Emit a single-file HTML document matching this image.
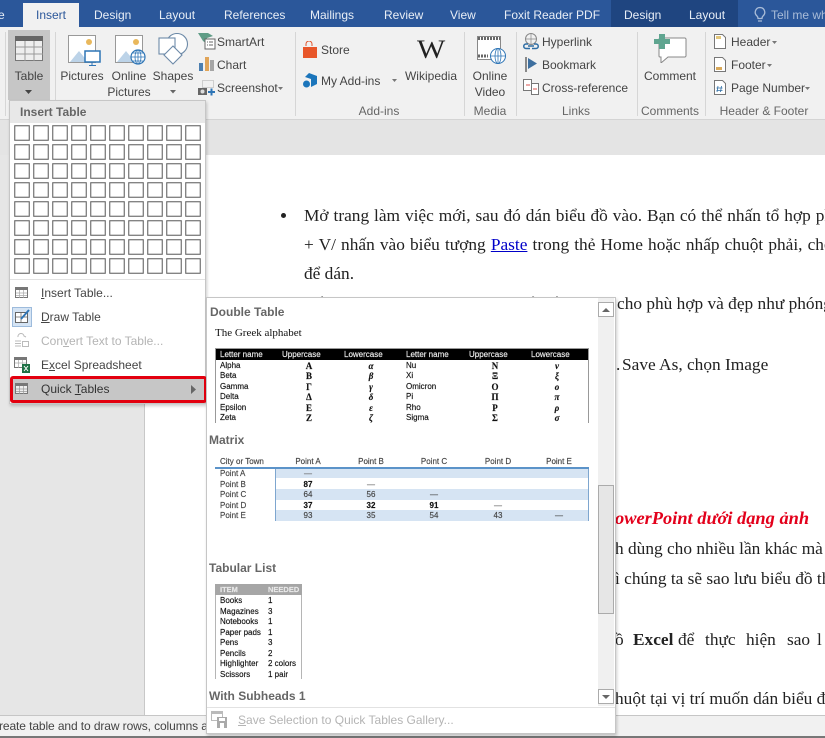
<!DOCTYPE html>
<html><head><meta charset="utf-8"><style>
html,body{margin:0;padding:0}
body{width:825px;height:738px;position:relative;overflow:hidden;background:#e6e6e6;font-family:"Liberation Sans","DejaVu Sans",sans-serif;font-size:12px;color:#444}
div,span,svg{position:absolute}
u{position:static}
.t{white-space:nowrap;line-height:16px;height:16px}
.c{transform:translateX(-50%)}
.tab{color:#e8eef6;top:7px;font-size:12px}
.g{color:#666;top:103px}
.d{font-family:"Liberation Serif","DejaVu Serif",serif;font-size:17.33px;color:#222;white-space:nowrap;line-height:20px;height:20px}
.sep{width:1px;background:#d6d6d6;top:32px;height:84px}
.m{left:41px;color:#444}
.h{left:209px;font-weight:bold;color:#666;font-size:12px}
.s{font-size:8px;line-height:10px;height:10px;white-space:nowrap;color:#111;margin-top:1px;-webkit-text-stroke:.15px currentColor}
.b{font-weight:bold}
.wh{color:#eee}
.se{font-family:"Liberation Serif",serif;font-weight:bold;font-size:9px}
.i{font-family:"Liberation Serif",serif;font-style:italic;font-weight:bold;font-size:9px}
</style></head><body>

<!-- Document -->
<div style="left:0;top:119px;width:825px;height:36px;background:#e4e4e4"></div>
<div style="left:144px;top:155px;width:681px;height:560px;background:#fff;border-left:1px solid #c8c8c8"></div>
<div style="left:281px;top:213px;width:5px;height:5px;border-radius:50%;background:#222"></div>
<div class="d" style="left:304px;top:206px;word-spacing:.6px">Mở trang làm việc mới, sau đó dán biểu đồ vào. Bạn có thể nhấn tổ hợp phím</div>
<div class="d" style="left:304px;top:235px;word-spacing:.8px">+ V/ nhấn vào biểu tượng <u style="color:#0000c8">Paste</u> trong thẻ Home hoặc nhấp chuột phải, chọn</div>
<div class="d" style="left:304px;top:264px">để dán.</div>
<div class="d" style="left:304px;top:294px">Điều chỉnh lại kích thước của biểu đồ</div>
<div class="d" style="left:617px;top:294px">cho phù hợp và đẹp như phóng</div>
<div class="d" style="left:616px;top:355px">.</div><div class="d" style="left:622px;top:355px">Save As, chọn Image</div>
<div class="d" style="left:615px;top:508px;font-size:18.4px;color:#e3001b;font-weight:bold;font-style:italic">owerPoint dưới dạng ảnh</div>
<div class="d" style="left:615px;top:539px">h dùng cho nhiều lần khác mà</div>
<div class="d" style="left:615px;top:569px">ì chúng ta sẽ sao lưu biểu đồ th</div>
<div class="d" style="left:615px;top:630px">ồ</div><div class="d" style="left:633px;top:630px;font-weight:bold">Excel</div><div class="d" style="left:678px;top:630px">để</div><div class="d" style="left:705px;top:630px">thực</div><div class="d" style="left:746px;top:630px">hiện</div><div class="d" style="left:787px;top:630px">sao</div><div class="d" style="left:817px;top:630px">l</div>
<div class="d" style="left:615px;top:689px">huột tại vị trí muốn dán biểu đồ</div>

<!-- Status bar -->
<div style="left:0;top:715px;width:825px;height:21px;background:#f1f1f1;border-top:1px solid #c6c6c6"></div>
<div style="left:0;top:736px;width:825px;height:2px;background:#777"></div>
<div class="t" style="left:-1px;top:718px;color:#444;font-size:12px;letter-spacing:-.1px">reate table and to draw rows, columns a</div>

<!-- Ribbon -->
<div style="left:0;top:0;width:825px;height:27px;background:#2b579a"></div>
<div style="left:611px;top:0;width:127px;height:27px;background:#1f4580"></div>
<div style="left:23px;top:3px;width:56px;height:24px;background:#f1f1f1"></div>
<div style="left:0;top:27px;width:825px;height:92px;background:#f1f1f1;border-bottom:1px solid #d4d4d4"></div>
<span class="t tab" style="left:-2px">e</span>
<span class="t tab" style="left:36px;color:#2b579a">Insert</span>
<span class="t tab" style="left:94px">Design</span>
<span class="t tab" style="left:159px">Layout</span>
<span class="t tab" style="left:224px">References</span>
<span class="t tab" style="left:310px">Mailings</span>
<span class="t tab" style="left:384px">Review</span>
<span class="t tab" style="left:450px">View</span>
<span class="t tab" style="left:504px">Foxit Reader PDF</span>
<span class="t tab" style="left:624px">Design</span>
<span class="t tab" style="left:689px">Layout</span>
<svg style="left:753px;top:6px" width="14" height="18" fill="none" stroke="#a9bcd8" stroke-width="1.3"><path d="M7 1.5a4.8 4.8 0 0 0-3 8.5c.8.8 1 1.500 1 2.500h4c0-1 .2-1.700 1-2.500a4.800 4.800 0 0 0-3-8.500zM5 15h4"/></svg>
<span class="t" style="left:771px;top:7px;color:#a9bcd8">Tell me wh</span>

<div class="sep" style="left:5px"></div>
<div class="sep" style="left:55px"></div>
<div class="sep" style="left:295px"></div>
<div class="sep" style="left:464px"></div>
<div class="sep" style="left:516px"></div>
<div class="sep" style="left:637px"></div>
<div class="sep" style="left:705px"></div>

<!-- Table button -->
<div style="left:8px;top:30px;width:42px;height:70px;background:#c6c6c6"></div>
<svg style="left:15px;top:36px" width="29" height="26"><rect x=".5" y=".5" width="27" height="24" fill="#eee" stroke="#777"/><rect width="28" height="5" fill="#666"/><path d="M1 11h27M1 18h27M10 5v20M19 5v20" stroke="#999"/></svg>
<span class="t c" style="left:29px;top:68px">Table</span>
<svg style="left:25px;top:90px" width="8" height="4"><path d="M0 0h7L3.500 4z" fill="#444"/></svg>

<!-- Pictures -->
<svg style="left:68px;top:35px" width="34" height="32"><rect x=".5" y=".5" width="27" height="27" fill="#fff" stroke="#999"/><circle cx="21" cy="7" r="3" fill="#e9b85c"/><path d="M2 27l9-11 9 11z" fill="#bcd3e8"/><rect x="17" y="16" width="15" height="11" fill="#fff" stroke="#2e75b6" stroke-width="1.500"/><path d="M24 27v3M21 30.500h7" stroke="#2e75b6"/></svg>
<span class="t c" style="left:82px;top:68px">Pictures</span>
<svg style="left:115px;top:35px" width="32" height="32"><rect x=".5" y=".5" width="27" height="27" fill="#fff" stroke="#999"/><circle cx="21" cy="7" r="3" fill="#e9b85c"/><path d="M2 27l9-11 9 11z" fill="#bcd3e8"/><circle cx="23" cy="22" r="7" fill="#fff" stroke="#2e75b6" stroke-width="1.200"/><path d="M16 22h14M23 15v14M18 18h10M18 26h10" stroke="#2e75b6" stroke-width=".8"/><ellipse cx="23" cy="22" rx="3" ry="7" fill="none" stroke="#2e75b6" stroke-width=".8"/></svg>
<span class="t c" style="left:129px;top:68px">Online</span>
<span class="t c" style="left:129px;top:84px">Pictures</span>
<svg style="left:158px;top:33px" width="32" height="32" fill="#fff" stroke="#6d8aa8" stroke-width="1.100"><circle cx="19" cy="11" r="10.500"/><rect x="1" y="5" width="16" height="16"/><path d="M15 13l9 9-9 9-9-9z"/></svg>
<span class="t c" style="left:173px;top:68px">Shapes</span>
<svg style="left:170px;top:90px" width="7" height="4"><path d="M0 0h6L3 3.500z" fill="#666"/></svg>

<svg style="left:198px;top:32px" width="18" height="18"><path d="M0 1h10l5 3-6 2 0 6-4-3z" fill="#5f9c86"/><rect x="7" y="7" width="10" height="10" fill="#fff" stroke="#666"/><path d="M9 10h1M11 10h4M9 13h1M11 13h4" stroke="#666"/></svg>
<span class="t" style="left:217px;top:34px">SmartArt</span>
<svg style="left:199px;top:56px" width="16" height="16"><rect y="7" width="4" height="8" fill="#4c7fb0"/><rect x="6" y="1" width="4" height="14" fill="#e0a458"/><rect x="11" y="4" width="4" height="11" fill="#a5a5a5"/></svg>
<span class="t" style="left:217px;top:57px">Chart</span>
<svg style="left:198px;top:80px" width="18" height="16"><rect x="4.500" y=".5" width="11" height="7" fill="none" stroke="#aaa" stroke-dasharray="1 1"/><rect y="8" width="9" height="7" fill="#666"/><circle cx="4.500" cy="11.500" r="2" fill="#ddd"/><path d="M10 12h7M13.500 8.500v7" stroke="#2e75b6" stroke-width="2"/></svg>
<span class="t" style="left:217px;top:80px">Screenshot</span>
<svg style="left:278px;top:87px" width="6" height="3"><path d="M0 0h5L2.500 3z" fill="#777"/></svg>

<!-- Add-ins -->
<svg style="left:302px;top:41px" width="16" height="18"><path d="M4 5V3a3 3 0 0 1 6 0v2" stroke="#e2542b" fill="none"/><path d="M1 6h14v11H1z" fill="#e8562a"/></svg>
<span class="t" style="left:321px;top:42px">Store</span>
<svg style="left:303px;top:72px" width="15" height="17"><path d="M6 1l8 3v8l-6 3V7L2 5z" fill="#1b75bb"/><circle cx="3.500" cy="12" r="3.500" fill="#1b75bb"/></svg>
<span class="t" style="left:321px;top:73px">My Add-ins</span>
<svg style="left:392px;top:79px" width="6" height="3"><path d="M0 0h5L2.500 3z" fill="#777"/></svg>
<span class="se" style="left:417px;top:35px;font-size:26px;line-height:30px;color:#222;font-weight:normal;transform:scaleX(1.15);transform-origin:0 0">W</span>
<span class="t c" style="left:431px;top:68px">Wikipedia</span>
<span class="t c g" style="left:379px">Add-ins</span>
<svg style="left:477px;top:36px" width="30" height="29"><rect x=".5" y=".5" width="23" height="23" fill="#fff" stroke="#888"/><path d="M1 2.500h22M1 20h10" stroke="#666" stroke-width="3" stroke-dasharray="2 1"/><circle cx="21" cy="20" r="7.500" fill="#fff" stroke="#2e75b6"/><path d="M14 20h14M21 13v14" stroke="#2e75b6" stroke-width=".8"/><ellipse cx="21" cy="20" rx="3" ry="7.500" fill="none" stroke="#2e75b6" stroke-width=".8"/></svg>
<span class="t c" style="left:490px;top:68px">Online</span>
<span class="t c" style="left:490px;top:84px">Video</span>
<span class="t c g" style="left:490px">Media</span>

<!-- Links -->
<svg style="left:523px;top:33px" width="16" height="17" fill="none"><circle cx="8" cy="6" r="5.500" stroke="#888"/><path d="M3 6h10M8 1v10" stroke="#888" stroke-width=".7"/><path d="M5 11H3a2 2 0 0 0 0 4.500h4M11 11h2a2 2 0 0 1 0 4.500H9M5 13h6" stroke="#2e6da4" stroke-width="1.500"/></svg>
<span class="t" style="left:542px;top:34px">Hyperlink</span>
<svg style="left:525px;top:57px" width="14" height="16"><path d="M1 0v15" stroke="#666" stroke-width="1.500"/><path d="M3 1l9 5.500-9 5.500z" fill="#3e6f9f"/></svg>
<span class="t" style="left:542px;top:57px">Bookmark</span>
<svg style="left:523px;top:79px" width="17" height="16" fill="#fff" stroke="#777"><rect x=".5" y=".5" width="8" height="11"/><rect x="8.500" y="4.500" width="7" height="11"/><path d="M3 6h4M10 10h4" stroke="#d9534f"/></svg>
<span class="t" style="left:542px;top:80px">Cross-reference</span>
<span class="t c g" style="left:576px">Links</span>

<!-- Comment -->
<svg style="left:653px;top:33px" width="34" height="30"><path d="M7 5h25a1.500 1.500 0 0 1 1 1v17a1.500 1.500 0 0 1-1 1H15l-7 6v-6H7a1 1 0 0 1-1-1V6z" fill="#fff" stroke="#888"/><path d="M1 6h5V1h6v5h5v5h-5v5H6v-5H1z" fill="#5fa590"/></svg>
<span class="t c" style="left:670px;top:68px">Comment</span>
<span class="t c g" style="left:670px">Comments</span>

<!-- Header/Footer -->
<svg style="left:714px;top:34px" width="12" height="15"><path d="M.5.5h8l3 3v11H.5z" fill="#fff" stroke="#777"/><rect x="2" y="2" width="5" height="3" fill="#e3c77a"/></svg>
<span class="t" style="left:731px;top:34px">Header</span>
<svg style="left:772px;top:41px" width="6" height="3"><path d="M0 0h5L2.500 3z" fill="#777"/></svg>
<svg style="left:714px;top:57px" width="12" height="15"><path d="M.5.5h8l3 3v11H.5z" fill="#fff" stroke="#777"/><rect x="2" y="10" width="6" height="3" fill="#d9a95a"/></svg>
<span class="t" style="left:731px;top:57px">Footer</span>
<svg style="left:767px;top:64px" width="6" height="3"><path d="M0 0h5L2.500 3z" fill="#777"/></svg>
<svg style="left:714px;top:80px" width="12" height="15"><path d="M.5.5h8l3 3v11H.5z" fill="#fff" stroke="#777"/><path d="M4 6l-1 6M7.500 6l-1 6M2.500 8h6M2.500 10.500h6" stroke="#2e6da4" stroke-width=".8"/></svg>
<span class="t" style="left:731px;top:80px">Page Number</span>
<svg style="left:805px;top:87px" width="6" height="3"><path d="M0 0h5L2.500 3z" fill="#777"/></svg>
<span class="t c g" style="left:764px">Header &amp; Footer</span>

<!-- Insert table menu -->
<div style="left:9px;top:100px;width:197px;height:304px;background:#fff;border:1px solid #c6c6c6;box-sizing:border-box;box-shadow:1px 2px 3px rgba(0,0,0,.2)"></div>
<div style="left:10px;top:101px;width:195px;height:22px;background:#e8e8e8"></div>
<span class="t b" style="left:20px;top:104px;color:#666">Insert Table</span>
<svg style="left:14px;top:125px" width="188" height="150"><defs><pattern id="p" width="19" height="19" patternUnits="userSpaceOnUse"><rect x=".75" y=".75" width="14.500" height="14.500" fill="#fff" stroke="#666" stroke-width="1.100"/></pattern></defs><rect width="188" height="150" fill="url(#p)"/></svg>
<div style="left:10px;top:279px;width:195px;height:1px;background:#e2e2e2"></div>

<svg style="left:15px;top:287px" width="14" height="12"><rect x=".5" y=".5" width="12" height="10" fill="#fff" stroke="#777"/><rect width="13" height="3" fill="#777"/><path d="M1 6h11M1 8.500h11M4.500 3v8M8.500 3v8" stroke="#aaa" stroke-width=".7"/></svg>
<span class="t m" style="top:285px"><u>I</u>nsert Table...</span>
<div style="left:12px;top:307px;width:20px;height:20px;background:#d5e4f4;border:1px solid #9dbbdc;box-sizing:border-box"></div>
<svg style="left:15px;top:309px" width="16" height="15"><rect x=".5" y="3.500" width="12" height="10" fill="#fff" stroke="#666"/><path d="M1 8h11M6 4v9" stroke="#888"/><path d="M6 10L14 1" stroke="#2e75b6" stroke-width="2"/></svg>
<span class="t m" style="top:309px"><u>D</u>raw Table</span>
<svg style="left:14px;top:332px" width="16" height="16" stroke="#bbb" fill="none"><path d="M1 9h6M1 11.500h6M1 14h6"/><rect x="8.500" y="9.500" width="6" height="5"/><path d="M4 5a3 3 0 0 1 6-1l2 1"/></svg>
<span class="t m" style="top:333px;color:#b4b4b4">Con<u>v</u>ert Text to Table...</span>
<svg style="left:14px;top:357px" width="17" height="16"><rect x=".5" y=".5" width="12" height="10" fill="#fff" stroke="#777"/><rect width="13" height="3" fill="#777"/><path d="M1 6h11M4.500 3v8M8.500 3v8" stroke="#aaa" stroke-width=".7"/><rect x="8" y="7" width="8" height="9" fill="#1e7145"/><path d="M10 9l4 5M14 9l-4 5" stroke="#fff"/></svg>
<span class="t m" style="top:357px">E<u>x</u>cel Spreadsheet</span>
<div style="left:10px;top:376px;width:197px;height:27px;background:#c6c6c6;border:3px solid #e3000f;border-radius:3px;box-sizing:border-box"></div>
<svg style="left:15px;top:383px" width="14" height="12"><rect x=".5" y=".5" width="12" height="10" fill="#eee" stroke="#777"/><rect width="13" height="3" fill="#777"/><path d="M1 6h11M1 8.500h11M4.500 3v8M8.500 3v8" stroke="#999" stroke-width=".7"/></svg>
<span class="t m" style="top:381px;color:#333">Quick <u>T</u>ables</span>
<svg style="left:191px;top:385px" width="6" height="9"><path d="M0 0l5 4.500L0 9z" fill="#666"/></svg>

<!-- Quick tables popup -->
<div style="left:206px;top:297px;width:410px;height:437px;background:#fff;border:1px solid #c6c6c6;box-sizing:border-box;box-shadow:1px 2px 3px rgba(0,0,0,.2)"></div>
<div style="left:598px;top:298px;width:16px;height:408px;background:#f0f0f0"></div>
<div style="left:598px;top:302px;width:16px;height:15px;background:#fff;border:1px solid #ababab;box-sizing:border-box"></div>
<svg style="left:602px;top:308px" width="8" height="4"><path d="M0 4h8L4 0z" fill="#666"/></svg>
<div style="left:598px;top:485px;width:16px;height:129px;background:#e6e6e6;border:1px solid #ababab;box-sizing:border-box"></div>
<div style="left:598px;top:689px;width:16px;height:15px;background:#fff;border:1px solid #ababab;box-sizing:border-box"></div>
<svg style="left:602px;top:695px" width="8" height="4"><path d="M0 0h8L4 4z" fill="#666"/></svg>
<div style="left:207px;top:707px;width:408px;height:1px;background:#e2e2e2"></div>
<svg style="left:211px;top:711px" width="18" height="18"><rect x=".5" y=".5" width="11" height="9" fill="#fff" stroke="#bbb"/><rect width="12" height="3" fill="#bbb"/><rect x="6" y="6" width="10" height="11" fill="#aaa"/><rect x="8" y="7" width="6" height="3" fill="#fff"/><rect x="9" y="12" width="4" height="5" fill="#fff"/></svg>
<span class="t" style="left:238px;top:712px;color:#b4b4b4"><u>S</u>ave Selection to Quick Tables Gallery...</span>

<!-- Double Table -->
<span class="t h" style="left:210px;top:304px">Double Table</span>
<span class="t" style="left:215px;top:325px;font-family:'Liberation Serif',serif;font-size:11px;color:#111">The Greek alphabet</span>
<div style="left:215px;top:348px;width:374px;height:75px;border:solid #999;border-width:1px 1px 0;box-sizing:border-box"></div>
<div style="left:216px;top:349px;width:372px;height:11px;background:#000"></div>
<span class="s wh" style="left:220px;top:349px">Letter name</span><span class="s wh" style="left:282px;top:349px">Uppercase</span><span class="s wh" style="left:344px;top:349px">Lowercase</span><span class="s wh" style="left:406px;top:349px">Letter name</span><span class="s wh" style="left:469px;top:349px">Uppercase</span><span class="s wh" style="left:531px;top:349px">Lowercase</span>

<span class="s" style="left:220px;top:360px">Alpha</span><span class="s c se" style="left:309px;top:360px">Α</span><span class="s c i" style="left:371px;top:360px">α</span><span class="s" style="left:406px;top:360px">Nu</span><span class="s c se" style="left:495px;top:360px">Ν</span><span class="s c i" style="left:557px;top:360px">ν</span>
<span class="s" style="left:220px;top:370px">Beta</span><span class="s c se" style="left:309px;top:370px">Β</span><span class="s c i" style="left:371px;top:370px">β</span><span class="s" style="left:406px;top:370px">Xi</span><span class="s c se" style="left:495px;top:370px">Ξ</span><span class="s c i" style="left:557px;top:370px">ξ</span>
<span class="s" style="left:220px;top:381px">Gamma</span><span class="s c se" style="left:309px;top:381px">Γ</span><span class="s c i" style="left:371px;top:381px">γ</span><span class="s" style="left:406px;top:381px">Omicron</span><span class="s c se" style="left:495px;top:381px">Ο</span><span class="s c i" style="left:557px;top:381px">ο</span>
<span class="s" style="left:220px;top:391px">Delta</span><span class="s c se" style="left:309px;top:391px">Δ</span><span class="s c i" style="left:371px;top:391px">δ</span><span class="s" style="left:406px;top:391px">Pi</span><span class="s c se" style="left:495px;top:391px">Π</span><span class="s c i" style="left:557px;top:391px">π</span>
<span class="s" style="left:220px;top:402px">Epsilon</span><span class="s c se" style="left:309px;top:402px">Ε</span><span class="s c i" style="left:371px;top:402px">ε</span><span class="s" style="left:406px;top:402px">Rho</span><span class="s c se" style="left:495px;top:402px">Ρ</span><span class="s c i" style="left:557px;top:402px">ρ</span>
<span class="s" style="left:220px;top:412px">Zeta</span><span class="s c se" style="left:309px;top:412px">Ζ</span><span class="s c i" style="left:371px;top:412px">ζ</span><span class="s" style="left:406px;top:412px">Sigma</span><span class="s c se" style="left:495px;top:412px">Σ</span><span class="s c i" style="left:557px;top:412px">σ</span>

<!-- Matrix -->
<span class="t h" style="top:432px">Matrix</span>
<span class="s" style="left:220px;top:456px;color:#444">City or Town</span><span class="s c" style="left:308px;top:456px;color:#444">Point A</span><span class="s c" style="left:371px;top:456px;color:#444">Point B</span><span class="s c" style="left:434px;top:456px;color:#444">Point C</span><span class="s c" style="left:498px;top:456px;color:#444">Point D</span><span class="s c" style="left:559px;top:456px;color:#444">Point E</span>
<div style="left:276px;top:468px;width:312px;height:10px;background:#d6e4f3"></div>
<div style="left:276px;top:489px;width:312px;height:11px;background:#d6e4f3"></div>
<div style="left:276px;top:510px;width:312px;height:11px;background:#d6e4f3"></div>
<div style="left:275px;top:468px;width:1px;height:53px;background:#7ea6cf"></div>
<div style="left:588px;top:468px;width:1px;height:53px;background:#7ea6cf"></div>
<div style="left:215px;top:467px;width:374px;height:2px;background:#5b93c9"></div>
<span class="s" style="left:220px;top:468px;color:#444">Point A</span><span class="s c" style="left:308px;top:468px;color:#666">—</span>
<span class="s" style="left:220px;top:479px;color:#444">Point B</span><span class="s c b" style="left:308px;top:479px">87</span><span class="s c" style="left:371px;top:479px;color:#666">—</span>
<span class="s" style="left:220px;top:489px;color:#444">Point C</span><span class="s c" style="left:308px;top:489px;color:#444">64</span><span class="s c" style="left:371px;top:489px;color:#444">56</span><span class="s c" style="left:434px;top:489px;color:#444">—</span>
<span class="s" style="left:220px;top:500px;color:#444">Point D</span><span class="s c b" style="left:308px;top:500px">37</span><span class="s c b" style="left:371px;top:500px">32</span><span class="s c b" style="left:434px;top:500px">91</span><span class="s c" style="left:498px;top:500px;color:#666">—</span>
<span class="s" style="left:220px;top:510px;color:#444">Point E</span><span class="s c" style="left:308px;top:510px;color:#444">93</span><span class="s c" style="left:371px;top:510px;color:#444">35</span><span class="s c" style="left:434px;top:510px;color:#444">54</span><span class="s c" style="left:498px;top:510px;color:#444">43</span><span class="s c" style="left:559px;top:510px;color:#444">—</span>

<!-- Tabular list -->
<span class="t h" style="top:560px">Tabular List</span>
<div style="left:215px;top:584px;width:87px;height:95px;border:solid #b5b5b5;border-width:0 1px;box-sizing:border-box"></div>
<div style="left:215px;top:584px;width:87px;height:11px;background:#a6a6a6"></div>
<span class="s" style="left:220px;top:584px;color:#e8e8e8;font-weight:bold;font-size:7.5px">ITEM</span><span class="s" style="left:268px;top:584px;color:#e8e8e8;font-weight:bold;font-size:7.5px">NEEDED</span>
<span class="s" style="left:220px;top:595px">Books</span><span class="s" style="left:268px;top:595px">1</span>
<span class="s" style="left:220px;top:606px">Magazines</span><span class="s" style="left:268px;top:606px">3</span>
<span class="s" style="left:220px;top:616px">Notebooks</span><span class="s" style="left:268px;top:616px">1</span>
<span class="s" style="left:220px;top:627px">Paper pads</span><span class="s" style="left:268px;top:627px">1</span>
<span class="s" style="left:220px;top:637px">Pens</span><span class="s" style="left:268px;top:637px">3</span>
<span class="s" style="left:220px;top:648px">Pencils</span><span class="s" style="left:268px;top:648px">2</span>
<span class="s" style="left:220px;top:658px">Highlighter</span><span class="s" style="left:268px;top:658px">2 colors</span>
<span class="s" style="left:220px;top:669px">Scissors</span><span class="s" style="left:268px;top:669px">1 pair</span>
<span class="t h" style="top:688px">With Subheads 1</span>
</body></html>
